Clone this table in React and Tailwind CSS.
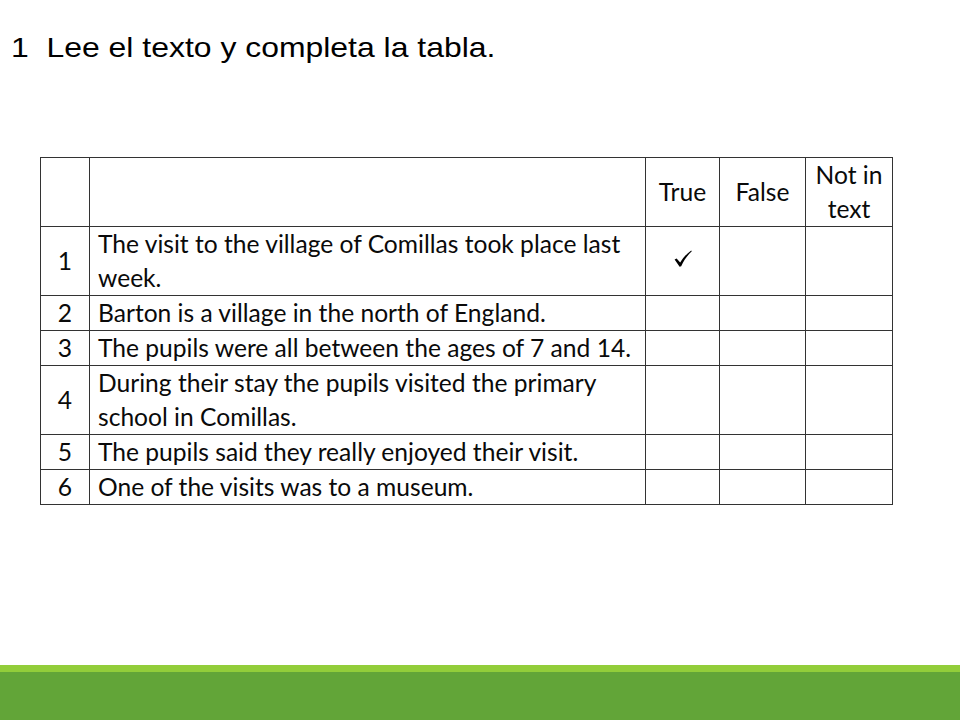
import React from 'react';

const rows = [
  { n: '1', text: 'The visit to the village of Comillas took place last week.', tall: true, check: true },
  { n: '2', text: 'Barton is a village in the north of England.' },
  { n: '3', text: 'The pupils were all between the ages of 7 and 14.' },
  { n: '4', text: 'During their stay the pupils visited the primary school in Comillas.', tall: true },
  { n: '5', text: 'The pupils said they really enjoyed their visit.' },
  { n: '6', text: 'One of the visits was to a museum.' },
];

const cell = 'border border-[#333] p-0 align-middle';

function Tick() {
  return (
    <svg width="18" height="17" viewBox="0 0 18 17" className="inline-block -translate-y-[5px]">
      <path
        d="M0.6 9.6 L2.6 8.4 L6.2 12.6 C9 7.8 12.6 3.6 17.2 0.4 L17.8 1.3 C13.6 5 10 10 7.2 16.2 L5.6 16.8 Z"
        fill="#000"
      />
    </svg>
  );
}

export default function App() {
  return (
    <div className="w-[960px] h-[720px] bg-white flex flex-col overflow-hidden">
      {/* Title */}
      <h1 className="pl-[11px] pt-[32px] text-[28px] leading-[32px] text-black font-['Liberation_Sans',Arial,sans-serif]">
        <span className="inline-block origin-left scale-x-[1.14] whitespace-pre">1  Lee el texto y completa la tabla.</span>
      </h1>

      {/* Table */}
      <div className="flex-1 pl-[40px] pt-[93px]">
        <table className="border-collapse text-[24.6px] leading-[34px] text-[#0a0a0a] font-['Lato',sans-serif]">
          <colgroup>
            <col className="w-[49px]" />
            <col className="w-[556px]" />
            <col className="w-[74px]" />
            <col className="w-[86px]" />
            <col className="w-[87px]" />
          </colgroup>
          <tbody>
            <tr className="h-[68px]">
              <td className={cell}></td>
              <td className={cell}></td>
              <td className={`${cell} text-center`}>True</td>
              <td className={`${cell} text-center`}>False</td>
              <td className={`${cell} text-center`}>Not in<br />text</td>
            </tr>
            {rows.map((r) => (
              <tr key={r.n} className={r.tall ? 'h-[69px]' : 'h-[34px]'}>
                <td className={`${cell} text-center`}>{r.n}</td>
                <td className={`${cell} pl-[8px] pr-[4px]`}>{r.text}</td>
                <td className={`${cell} text-center`}>{r.check && <Tick />}</td>
                <td className={cell}></td>
                <td className={cell}></td>
              </tr>
            ))}
          </tbody>
        </table>
      </div>

      {/* Bottom green band */}
      <div className="h-[7px] bg-[#92cd3a]" />
      <div className="h-[48px] bg-[#62a538]" />
    </div>
  );
}
